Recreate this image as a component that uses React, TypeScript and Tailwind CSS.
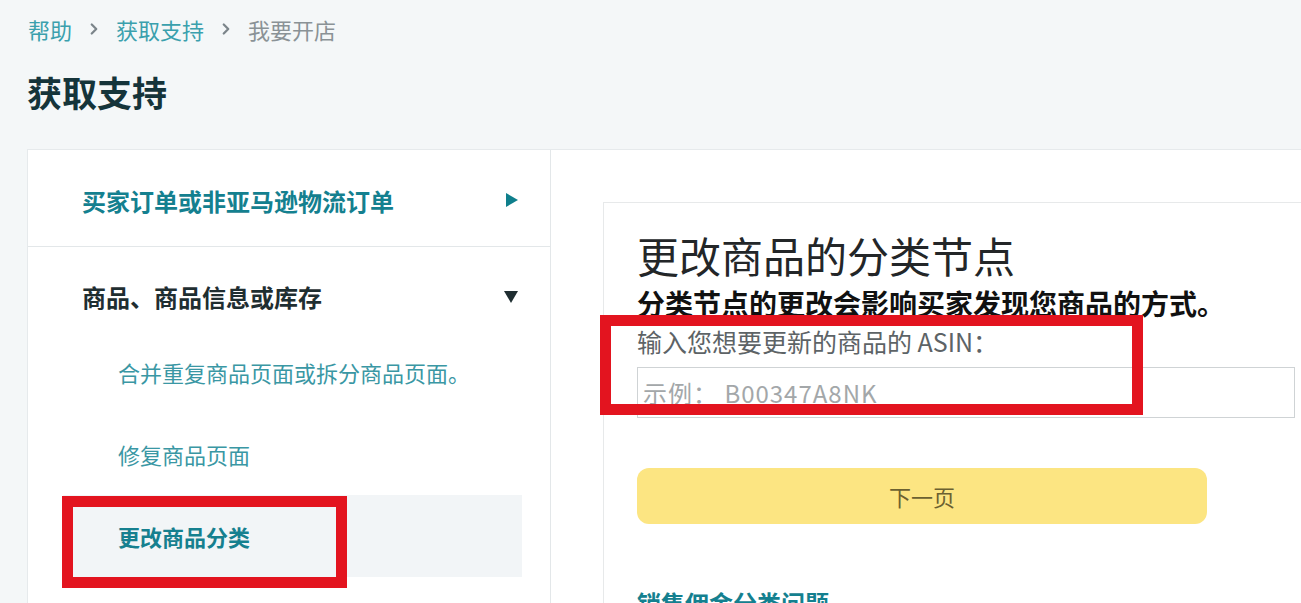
import { ChevronRight } from "lucide-react";

const font = {
  fontFamily: '"Noto Sans CJK SC", "Noto Sans", sans-serif',
};

const SubItem = ({ label, active }: { label: string; active?: boolean }) => (
  <div
    className={`relative ml-[35px] mr-[28px] flex h-[82px] items-center pl-[55px] ${
      active ? "bg-[#f2f5f7]" : ""
    }`}
  >
    <span
      className={`text-[22px] leading-[30px] ${
        active ? "font-bold text-[#16808f]" : "text-[#3a97a4]"
      }`}
    >
      {label}
    </span>
    {active && (
      <div className="absolute left-[-1px] top-[1px] h-[92px] w-[285px] border-[11px] border-[#e3141f]" />
    )}
  </div>
);

const App = () => {
  return (
    <div
      className="h-[603px] w-[1301px] overflow-hidden bg-[#f4f7f8] pl-[27px]"
      style={font}
    >
      {/* breadcrumb */}
      <div className="flex items-center pl-[1px] pt-[14px] text-[22px] leading-[30px]">
        <span className="text-[#3aa0ad]">帮助</span>
        <ChevronRight className="mx-[13px] h-[18px] w-[18px] text-[#7b858a]" strokeWidth={3} />
        <span className="text-[#3aa0ad]">获取支持</span>
        <ChevronRight className="mx-[13px] h-[18px] w-[18px] text-[#7b858a]" strokeWidth={3} />
        <span className="text-[#8a9296]">我要开店</span>
      </div>

      <h1 className="mt-[27px] text-[35px] font-bold leading-[42px] text-[#15343a]">
        获取支持
      </h1>

      <div className="mt-[36px] flex h-[500px] border-l border-t border-[#e6eaec] bg-white">
        {/* left nav */}
        <div className="w-[523px] shrink-0 border-r border-[#e3e7e9]">
          <div className="flex h-[97px] items-start justify-between border-b border-[#e3e7e9] pl-[54px] pr-[32px] pt-[35px]">
            <span className="text-[24px] font-bold leading-[32px] text-[#14808f]">
              买家订单或非亚马逊物流订单
            </span>
            <svg width="12" height="14" viewBox="0 0 12 14" className="mt-[8px]">
              <polygon points="0,0 12,7 0,14" fill="#0f7f8c" />
            </svg>
          </div>
          <div className="flex items-start justify-between pl-[54px] pr-[32px] pt-[34px]">
            <span className="text-[24px] font-bold leading-[32px] text-[#1f2e31]">
              商品、商品信息或库存
            </span>
            <svg width="14" height="12" viewBox="0 0 14 12" className="mt-[10px]">
              <polygon points="0,0 14,0 7,12" fill="#1f2e31" />
            </svg>
          </div>
          <div className="mt-[18px]">
            <SubItem label="合并重复商品页面或拆分商品页面。" />
            <SubItem label="修复商品页面" />
            <SubItem label="更改商品分类" active />
          </div>
        </div>

        {/* right content */}
        <div className="flex-1 pl-[52px] pt-[52px]">
          <div className="relative w-[720px] border-l border-t border-[#e7e9ea] bg-white pl-[33px] pt-[27px]">
            <h2 className="text-[42px] leading-[50px] text-[#232628]">
              更改商品的分类节点
            </h2>
            <p className="mt-[6px] text-[28px] font-bold leading-[34px] text-[#111]">
              分类节点的更改会影响买家发现您商品的方式。
            </p>
            <p className="mt-[6px] text-[25px] leading-[30px] text-[#5d6366]">
              输入您想要更新的商品的 ASIN：
            </p>
            <div className="mt-[11px] flex h-[51px] w-[658px] items-center border border-[#cfd3d5] pl-[5px] text-[24px] tracking-[1px] text-[#a3a7a9]">
              示例： B00347A8NK
            </div>
            <div className="absolute left-[-4px] top-[112px] h-[100px] w-[543px] border-[11px] border-[#e3141f]" />
            <button className="mt-[50px] flex h-[56px] w-[570px] items-center justify-center rounded-[12px] bg-[#fce582] text-[22px] text-[#6b6131]">
              下一页
            </button>
            <p className="mt-[63px] text-[24px] font-bold leading-[32px] text-[#14808f]">
              销售佣金分类问题
            </p>
          </div>
        </div>
      </div>
    </div>
  );
};

export default App;
